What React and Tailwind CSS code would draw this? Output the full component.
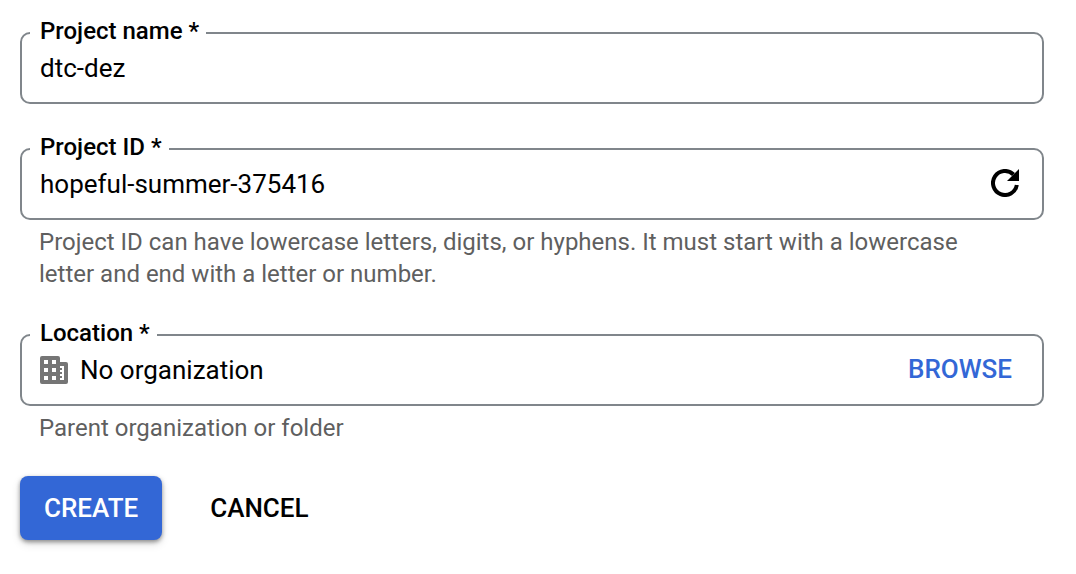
function Field({ label, id, children, hint }) {
  return (
    <div>
      <fieldset className="min-w-0 rounded-[10px] border-2 border-[#80868b] px-2">
        <legend className="pb-1 pl-2.5 pr-[7px] text-2xl leading-6 font-medium text-black">
          <label htmlFor={id}>{label} *</label>
        </legend>
        <div className="flex h-[55px] items-center px-2.5 pb-[13px]">{children}</div>
      </fieldset>
      {hint && <p className="pl-[19px] pt-1.5 pr-16 text-2xl leading-8 text-[#5f5f5f]">{hint}</p>}
    </div>
  );
}

const inputClass = "min-w-0 flex-1 bg-transparent text-[26px] leading-8 text-black outline-none";

export default function App() {
  return (
    <form
      className="flex flex-col bg-white pb-8 pl-5 pr-8 pt-[19px] font-[Roboto,sans-serif]"
      onSubmit={(e) => e.preventDefault()}
    >
      <Field label="Project name" id="name">
        <input id="name" className={inputClass} defaultValue="dtc-dez" />
      </Field>
      <div className="mt-[31px]">
        <Field
          label="Project ID"
          id="pid"
          hint="Project ID can have lowercase letters, digits, or hyphens. It must start with a lowercase letter and end with a letter or number."
        >
          <input id="pid" className={inputClass} defaultValue="hopeful-summer-375416" />
          <button type="button" aria-label="Refresh" className="mr-[5px] pb-0.5">
            <svg viewBox="0 0 28 28" className="size-7">
              <path d="M25.83 16A12 12 0 1 1 22.5 5.5" fill="none" stroke="#000" strokeWidth="4" />
              <path d="M28 0v12H16z" fill="#000" />
            </svg>
          </button>
        </Field>
      </div>
      <div className="mt-[31px]">
        <Field label="Location" id="loc" hint="Parent organization or folder">
          <svg viewBox="0 0 28 28" className="mr-3 size-7">
            <path
              fill="#757575"
              fillRule="evenodd"
              d="M2 0h16a2 2 0 0 1 2 2v4h6a2 2 0 0 1 2 2v18a2 2 0 0 1-2 2H2a2 2 0 0 1-2-2V2a2 2 0 0 1 2-2zM4 4v4h4V4zM12 4v4h4V4zM4 12v4h4v-4zM12 12v4h4v-4zM4 20v4h4v-4zM12 20v4h4v-4zM20 10v2h2v2h-2v2h2v2h-2v2h2v2h-2v2h4V10z"
            />
          </svg>
          <input id="loc" className={inputClass} defaultValue="No organization" />
          <button
            type="button"
            className="mr-3 pb-0.5 text-[26px] leading-8 font-medium text-[#3367d6]"
          >
            BROWSE
          </button>
        </Field>
      </div>
      <div className="mt-8 flex gap-6">
        <button
          type="submit"
          className="h-16 rounded-lg bg-[#3367d6] px-6 text-[26px] font-medium text-white shadow-[0_2px_4px_rgba(0,0,0,0.4),0_4px_10px_rgba(0,0,0,0.12)]"
        >
          CREATE
        </button>
        <button type="button" className="h-16 px-6 text-[26px] font-medium text-black">
          CANCEL
        </button>
      </div>
    </form>
  );
}
